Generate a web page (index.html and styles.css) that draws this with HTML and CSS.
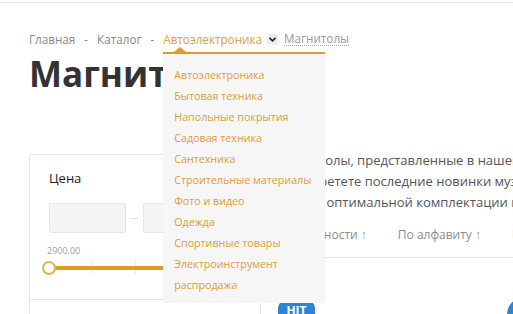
FILE: index.html
```html
<!DOCTYPE html>
<html lang="ru">
<head>
    <meta charset="UTF-8">
    <meta name="viewport" content="width=device-width, initial-scale=1.0">
    <title>Магнитолы</title>
    <link rel="stylesheet" href="styles.css">
</head>
<body>
    <div class="topbar"></div>
    <div class="page">
        <nav class="crumbs">
            <a href="#">Главная</a><span class="sep">-</span>
            <a href="#">Каталог</a><span class="sep">-</span>
            <span class="crumb-drop">
                <a href="#" class="active">Автоэлектроника</a>
                <span class="caret">
                    <svg width="7" height="5" viewBox="0 0 7 5"><path d="M0.5 0.8 L3.5 3.8 L6.5 0.8" fill="none" stroke="#222" stroke-width="1.6"/></svg>
                </span>
                <div class="menu">
                    <a href="#">Автоэлектроника</a>
                    <a href="#">Бытовая техника</a>
                    <a href="#">Напольные покрытия</a>
                    <a href="#">Садовая техника</a>
                    <a href="#">Сантехника</a>
                    <a href="#">Строительные материалы</a>
                    <a href="#">Фото и видео</a>
                    <a href="#">Одежда</a>
                    <a href="#">Спортивные товары</a>
                    <a href="#">Электроинструмент</a>
                    <a href="#">распродажа</a>
                </div>
            </span>
            <span class="current">Магнитолы</span>
        </nav>

        <h1>Магнитолы</h1>

        <div class="main">
            <aside class="filter">
                <div class="filter-block">
                    <div class="filter-title">Цена</div>
                    <div class="range-inputs">
                        <input type="text" class="range-input">
                        <span class="range-dash"></span>
                        <input type="text" class="range-input">
                    </div>
                    <div class="range-label">2900.00</div>
                    <div class="slider">
                        <span class="tick" style="left: 43px"></span>
                        <span class="tick" style="left: 86px"></span>
                        <span class="tick" style="left: 129px"></span>
                        <span class="tick" style="left: 172px"></span>
                        <span class="track"></span>
                        <span class="handle"></span>
                    </div>
                </div>
                <div class="filter-block"></div>
            </aside>

            <section class="content">
                <p class="intro">
                    Магнитолы, представленные в нашем каталоге, отличаются надёжностью.<br>
                    Приобретете последние новинки музыкальной техники для авто<br>
                    сразу в оптимальной комплектации по выгодной цене.
                </p>
                <div class="sort">
                    <a href="#">По мощности ↑</a>
                    <a href="#">По алфавиту ↑</a>
                    <a href="#">По цене ↑</a>
                </div>
                <div class="products">
                    <span class="badge-hit">HIT</span>
                    <span class="badge-round"></span>
                </div>
            </section>
        </div>
    </div>
</body>
</html>
```

FILE: styles.css
```css
body {
    margin: 0;
    width: 513px;
    height: 314px;
    overflow: hidden;
    background: #fff;
    font-family: "Open Sans", Arial, sans-serif;
    color: #333;
}
a {
    text-decoration: none;
    color: inherit;
}
.topbar {
    height: 2px;
    border-bottom: 1px solid #e2e2e2;
}
.page {
    padding-left: 29px;
}

/* breadcrumbs */
.crumbs {
    margin-top: 28px;
    display: flex;
    align-items: center;
    font-size: 11.7px;
    line-height: 16px;
    color: #8a8a8a;
    white-space: nowrap;
}
.crumbs .sep {
    margin: 0 9px;
}
.crumb-drop {
    position: relative;
    display: flex;
    align-items: center;
}
.crumbs .active {
    color: #dfa043;
}
.caret {
    width: 11px;
    height: 11px;
    margin-left: 5px;
    background: #ececec;
    border-radius: 2px;
    display: flex;
    align-items: center;
    justify-content: center;
}
.current {
    margin-left: 6px;
    color: #9a9a9a;
    border-bottom: 1px dotted #aaa;
    line-height: 13px;
}
.menu {
    position: absolute;
    top: 21px;
    left: 0;
    width: 162px;
    height: 238px;
    padding: 11px 0 0;
    background: #f6f6f6;
    border-top: 2px solid #e29a26;
    z-index: 10;
    display: flex;
    flex-direction: column;
}
.menu::before {
    content: "";
    position: absolute;
    top: -7px;
    left: 11px;
    border-left: 6px solid transparent;
    border-right: 6px solid transparent;
    border-bottom: 5px solid #e29a26;
}
.menu a {
    padding-left: 11px;
    font-size: 10.7px;
    line-height: 21px;
    color: #e09c3a;
}

/* title */
h1 {
    margin: 6px 0 0;
    font-size: 35px;
    line-height: 42px;
    font-weight: 700;
    color: #333;
}

/* layout */
.main {
    margin-top: 55px;
    display: flex;
    gap: 17px;
}
.filter {
    width: 230px;
    flex-shrink: 0;
    margin-top: 4px;
    border: 1px solid #e6e6e6;
    border-bottom: none;
}
.filter-block {
    padding: 14px 19px 0;
    height: 130px;
    border-bottom: 1px solid #e6e6e6;
}
.filter-block:last-child {
    border-bottom: none;
}
.filter-title {
    font-size: 13px;
    line-height: 18px;
    color: #222;
}
.range-inputs {
    margin-top: 16px;
    display: flex;
    align-items: center;
}
.range-input {
    width: 77px;
    height: 30px;
    box-sizing: border-box;
    margin: 0;
    background: #f4f4f4;
    border: 1px solid #e6e6e6;
    border-radius: 2px;
}
.range-dash {
    width: 8px;
    height: 1px;
    margin: 0 5px 0 4px;
    background: #ddd;
}
.range-label {
    margin: 11px 0 0 -2px;
    font-size: 9px;
    line-height: 14px;
    color: #a0a0a0;
}
.slider {
    position: relative;
    height: 20px;
}
.tick {
    position: absolute;
    top: 2px;
    width: 1px;
    height: 14px;
    background: #ececec;
}
.track {
    position: absolute;
    top: 8px;
    left: 0;
    right: 0;
    height: 4px;
    background: #e39b1f;
}
.handle {
    position: absolute;
    top: 3px;
    left: -7px;
    width: 10px;
    height: 10px;
    border: 2px solid #d9b45e;
    border-radius: 50%;
    background: #fff;
}

/* content */
.content {
    flex: 1;
    white-space: nowrap;
}
.intro {
    margin: 0;
    font-size: 13px;
    line-height: 21px;
    color: #555;
}
.sort {
    margin-top: 13px;
    display: flex;
    gap: 31px;
    font-size: 12px;
    line-height: 18px;
    color: #8c8c8c;
    padding-bottom: 13px;
    border-bottom: 1px solid #e6e6e6;
}
.products {
    position: relative;
    height: 60px;
}
.badge-hit {
    position: absolute;
    top: 43px;
    left: 0;
    width: 37px;
    height: 20px;
    border-radius: 7px;
    background: #2a86d2;
    color: #fff;
    font-size: 12px;
    font-weight: 700;
    text-align: center;
    line-height: 20px;
}
.badge-round {
    position: absolute;
    top: 40px;
    left: 229px;
    width: 32px;
    height: 32px;
    border-radius: 50%;
    background: #2a86d2;
}
```
